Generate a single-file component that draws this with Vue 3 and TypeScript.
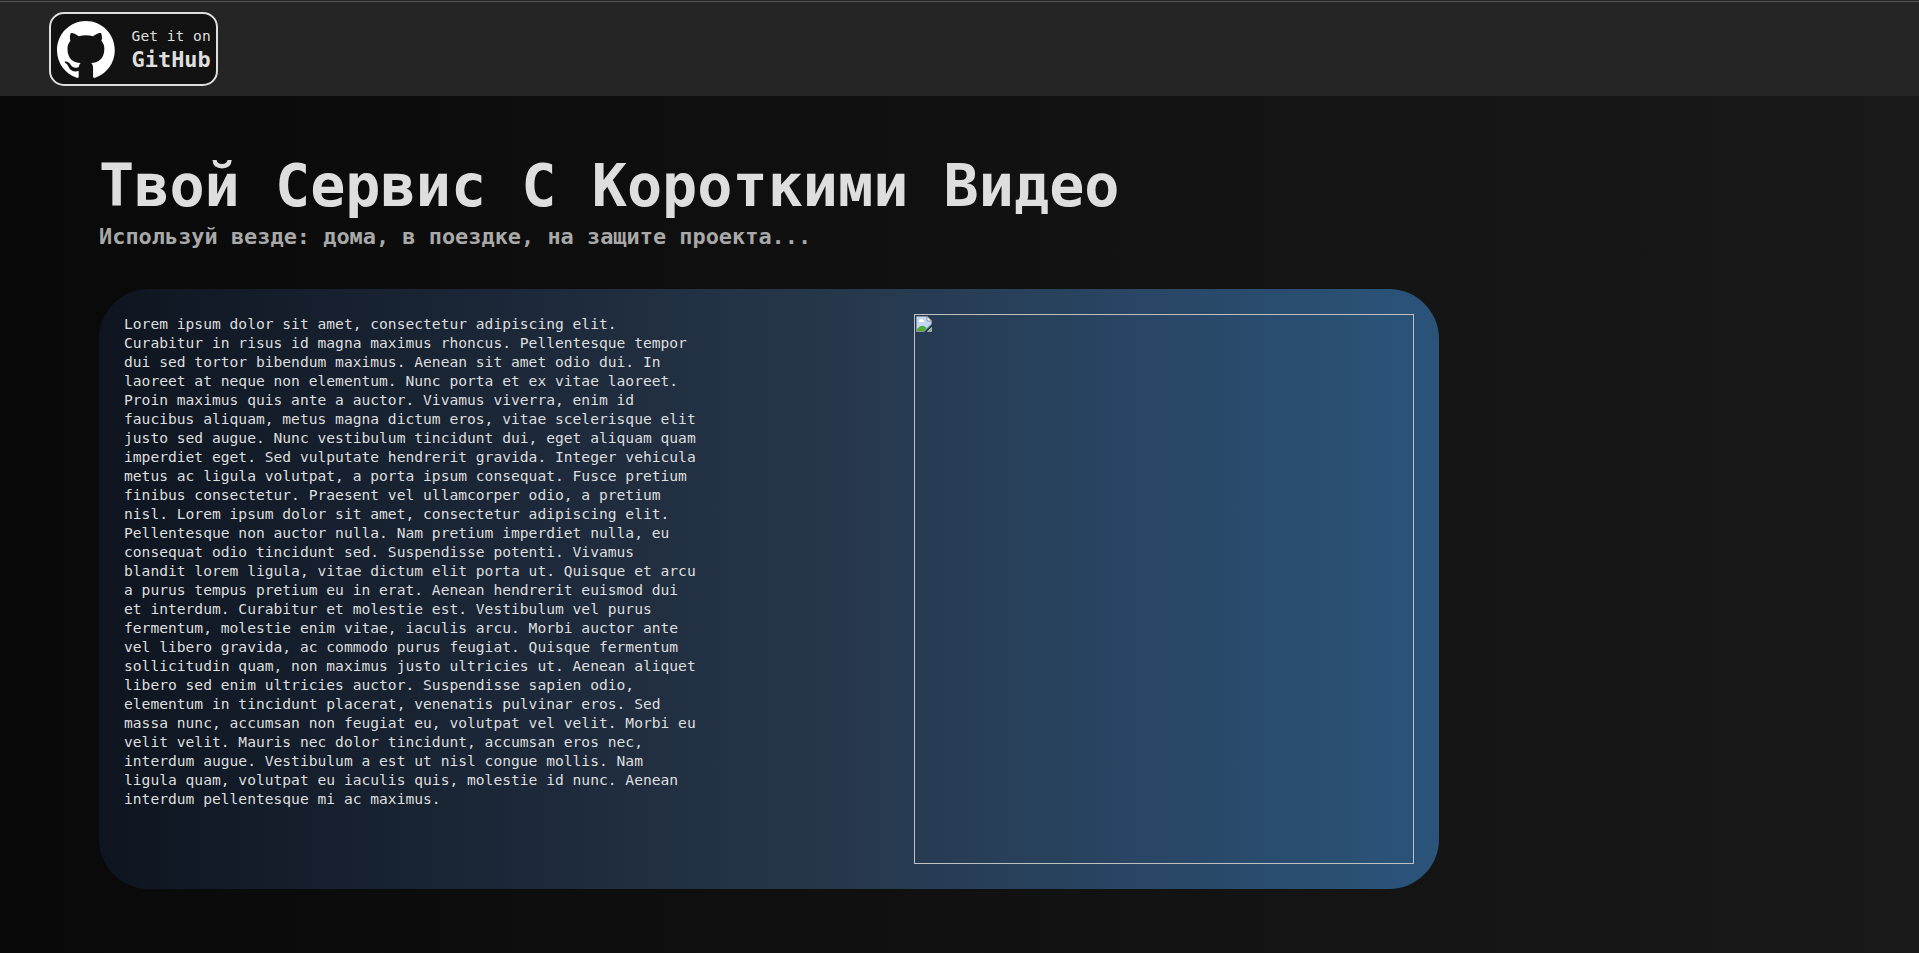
<script setup lang="ts">
const lines: string[] = [
  'Lorem ipsum dolor sit amet, consectetur adipiscing elit.',
  'Curabitur in risus id magna maximus rhoncus. Pellentesque tempor',
  'dui sed tortor bibendum maximus. Aenean sit amet odio dui. In',
  'laoreet at neque non elementum. Nunc porta et ex vitae laoreet.',
  'Proin maximus quis ante a auctor. Vivamus viverra, enim id',
  'faucibus aliquam, metus magna dictum eros, vitae scelerisque elit',
  'justo sed augue. Nunc vestibulum tincidunt dui, eget aliquam quam',
  'imperdiet eget. Sed vulputate hendrerit gravida. Integer vehicula',
  'metus ac ligula volutpat, a porta ipsum consequat. Fusce pretium',
  'finibus consectetur. Praesent vel ullamcorper odio, a pretium',
  'nisl. Lorem ipsum dolor sit amet, consectetur adipiscing elit.',
  'Pellentesque non auctor nulla. Nam pretium imperdiet nulla, eu',
  'consequat odio tincidunt sed. Suspendisse potenti. Vivamus',
  'blandit lorem ligula, vitae dictum elit porta ut. Quisque et arcu',
  'a purus tempus pretium eu in erat. Aenean hendrerit euismod dui',
  'et interdum. Curabitur et molestie est. Vestibulum vel purus',
  'fermentum, molestie enim vitae, iaculis arcu. Morbi auctor ante',
  'vel libero gravida, ac commodo purus feugiat. Quisque fermentum',
  'sollicitudin quam, non maximus justo ultricies ut. Aenean aliquet',
  'libero sed enim ultricies auctor. Suspendisse sapien odio,',
  'elementum in tincidunt placerat, venenatis pulvinar eros. Sed',
  'massa nunc, accumsan non feugiat eu, volutpat vel velit. Morbi eu',
  'velit velit. Mauris nec dolor tincidunt, accumsan eros nec,',
  'interdum augue. Vestibulum a est ut nisl congue mollis. Nam',
  'ligula quam, volutpat eu iaculis quis, molestie id nunc. Aenean',
  'interdum pellentesque mi ac maximus.',
]
const description: string = lines.join('\n')
</script>

<template>
  <div class="page">
    <header class="header">
      <a class="badge">
        <svg class="badge-logo" viewBox="0 0 98 96" aria-hidden="true">
          <path
            fill="#fff"
            fill-rule="evenodd"
            clip-rule="evenodd"
            d="M48.854 0C21.839 0 0 22 0 49.217c0 21.756 13.993 40.172 33.405 46.69 2.427.49 3.316-1.059 3.316-2.362 0-1.141-.08-5.052-.08-9.127-13.59 2.934-16.42-5.867-16.42-5.867-2.184-5.704-5.42-7.17-5.42-7.17-4.448-3.015.324-3.015.324-3.015 4.934.326 7.523 5.052 7.523 5.052 4.367 7.496 11.404 5.378 14.235 4.074.404-3.178 1.699-5.378 3.074-6.6-10.839-1.141-22.243-5.378-22.243-24.283 0-5.378 1.94-9.778 5.014-13.2-.485-1.222-2.184-6.275.486-13.038 0 0 4.125-1.304 13.426 5.052a46.97 46.97 0 0 1 12.214-1.63c4.125 0 8.33.571 12.213 1.63 9.302-6.356 13.427-5.052 13.427-5.052 2.67 6.763.97 11.816.485 13.038 3.155 3.422 5.015 7.822 5.015 13.2 0 18.905-11.404 23.06-22.324 24.283 1.78 1.548 3.316 4.481 3.316 9.126 0 6.6-.08 11.897-.08 13.526 0 1.304.89 2.853 3.316 2.364 19.412-6.52 33.405-24.935 33.405-46.691C97.707 22 75.788 0 48.854 0z"
          />
        </svg>
        <span class="badge-text">
          <span class="badge-small">Get it on</span>
          <span class="badge-big">GitHub</span>
        </span>
      </a>
    </header>
    <main class="content">
      <h1 class="title">Твой Сервис С Короткими Видео</h1>
      <h2 class="subtitle">Используй везде: дома, в поездке, на защите проекта...</h2>
      <section class="card">
        <p class="text">{{ description }}</p>
        <div class="preview">
          <svg class="broken" width="16" height="16" viewBox="0 0 16 16" aria-hidden="true">
            <path d="M0.5 0.5H11L15.5 5V8L8 15.5H0.5Z" fill="#c3d8f7" stroke="#8f9499" />
            <path d="M11 0.5V5H15.5Z" fill="#fff" stroke="#8f9499" />
            <path d="M3 6a1.5 1.5 0 0 1 1-2.3a1.7 1.7 0 0 1 3 .3a1.2 1.2 0 0 1 .6 2z" fill="#fff" />
            <path d="M1 15V13Q6 7 10.5 12L8 15Z" fill="#4eaa35" />
            <path d="M11.5 15.5L15.5 11.5V15.5Z" fill="#8cc47d" stroke="#a5acb0" />
          </svg>
        </div>
      </section>
    </main>
  </div>
</template>

<style>
body {
  margin: 0;
  background: #0a0a0a;
}
</style>

<style scoped>
.page {
  box-sizing: border-box;
  height: 953px;
  overflow: hidden;
  color: #dedede;
  background: linear-gradient(to right, #090909, #191919);
  font-family: "DejaVu Sans Mono", "Liberation Mono", monospace;
}
.header {
  box-sizing: border-box;
  height: 96px;
  padding: 12px 49px 0;
  background: linear-gradient(#252525 1px, #555 1px, #555 2px, #252525 2px);
}
.badge {
  box-sizing: border-box;
  display: flex;
  width: 169px;
  height: 74px;
  border: 2px solid #dedede;
  border-radius: 15px;
  background: #121212;
}
.badge-logo {
  width: 58px;
  height: 57px;
  margin: 7px 0 0 6px;
}
.badge-text {
  display: flex;
  flex-direction: column;
  margin: 12px 0 0 16.6px;
}
.badge-small {
  font-size: 14.6px;
  line-height: 19px;
}
.badge-big {
  font-size: 21.9px;
  font-weight: 700;
  line-height: 30px;
}
.content {
  padding: 53px 99px 0;
}
.title {
  margin: 0;
  font-size: 58.46px;
  line-height: 75px;
  white-space: nowrap;
}
.subtitle {
  margin: 0;
  font-size: 21.92px;
  line-height: 25px;
  color: #a9a9a9;
  white-space: nowrap;
}
.card {
  box-sizing: border-box;
  display: flex;
  justify-content: space-between;
  width: 1340px;
  height: 600px;
  margin-top: 40px;
  padding: 25px;
  border-radius: 50px;
  background: linear-gradient(to right, #0e1520, #26364a 53%, #2b547b);
}
.text {
  margin: 0;
  font-size: 14.617px;
  line-height: 19px;
  white-space: pre;
}
.preview {
  box-sizing: border-box;
  width: 500px;
  height: 550px;
  padding: 1px;
  border: 1px solid #c0c0c0;
}
.broken {
  display: block;
}
</style>
